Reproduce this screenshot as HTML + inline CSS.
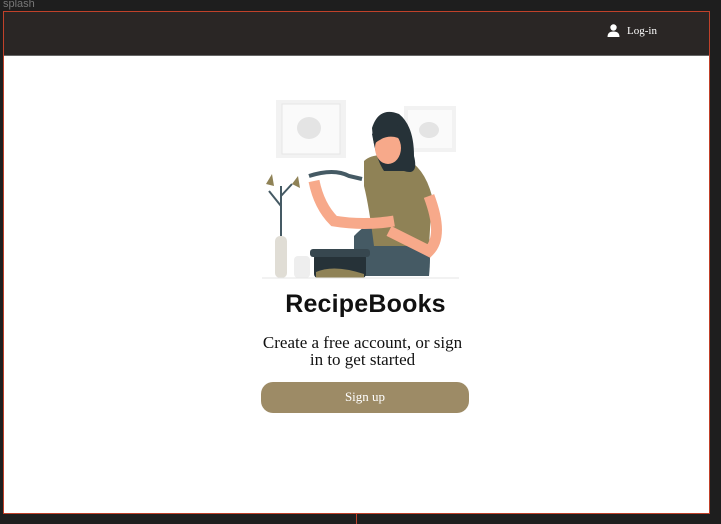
<!DOCTYPE html>
<html><head><meta charset="utf-8"><style>
*{margin:0;padding:0;box-sizing:border-box}
body{width:721px;height:524px;background:#1e1e1e;position:relative;overflow:hidden;font-family:"Liberation Serif",serif}
.lbl{position:absolute;left:3px;top:-2px;font:11px "Liberation Sans",sans-serif;color:#777}
.frame{position:absolute;left:3px;top:11px;width:707px;height:503px;border:1px solid #c0412a;background:#fff}
.hdr{position:absolute;left:0;top:0;width:705px;height:44px;background:#2a2625;border-bottom:1px solid #666}
.login{position:absolute;left:603px;top:12px;color:#fff;font-size:11px;display:flex;align-items:center;gap:7px}
.title{position:absolute;left:8px;width:707px;top:278px;text-align:center;font:bold 25px "Liberation Sans",sans-serif;color:#111;letter-spacing:.2px}
.sub{position:absolute;left:5px;width:707px;top:322px;text-align:center;font-size:17px;line-height:17px;color:#111}
.btn{position:absolute;left:257px;top:370px;width:208px;height:31px;border-radius:12px;background:#9d8b66;color:#fff;font-size:13px;text-align:center;line-height:30px}
.tick{position:absolute;left:356px;top:514px;width:1px;height:10px;background:#c0412a}
</style></head><body>
<div class="lbl">splash</div>
<div class="frame">
 <div class="hdr"><div class="login"><svg width="13" height="13" viewBox="0 0 13 13"><circle cx="6.5" cy="3.5" r="3.2" fill="#fff"/><path d="M0.5 13 Q0.5 7.5 6.5 7.5 Q12.5 7.5 12.5 13Z" fill="#fff"/></svg>Log-in</div></div>
 <svg style="position:absolute;left:250px;top:84px" width="210" height="185" viewBox="0 0 210 185">
  <rect x="22" y="4" width="70" height="58" fill="#f2f2f2"/><rect x="28" y="8" width="58" height="50" fill="#fafafa" stroke="#e6e6e6"/>
  <ellipse cx="55" cy="32" rx="12" ry="11" fill="#e4e4e4"/>
  <rect x="150" y="10" width="52" height="46" fill="#f2f2f2"/><rect x="154" y="14" width="44" height="38" fill="#fafafa"/>
  <ellipse cx="175" cy="34" rx="10" ry="8" fill="#e4e4e4"/>
  <path d="M100 180 L100 140 Q120 118 160 115 Q180 130 175 180Z" fill="#455a64"/>
  <path d="M110 65 Q120 55 150 62 Q170 70 178 100 L175 150 L120 150 Q115 110 110 90Z" fill="#8f8256"/>
  <path d="M118 32 Q125 10 145 18 Q160 30 160 60 Q165 80 150 75 L130 75 Q120 60 118 32Z" fill="#263238"/>
  <ellipse cx="134" cy="52" rx="13" ry="16" fill="#f7a98a"/>
  <path d="M118 38 Q130 22 150 32 L150 45 Q135 35 120 48Z" fill="#263238"/>
  <path d="M55 80 Q80 72 95 80 L108 83" stroke="#455a64" stroke-width="4" fill="none"/>
  <path d="M60 85 Q65 110 80 125 Q110 130 140 125" stroke="#f7a98a" stroke-width="11" fill="none"/>
  <path d="M175 100 Q190 140 175 155 L135 135" stroke="#f7a98a" stroke-width="11" fill="none"/>
  <rect x="60" y="158" width="52" height="24" rx="4" fill="#263238"/><rect x="56" y="153" width="60" height="8" rx="3" fill="#37474f"/>
  <path d="M62 176 Q80 168 110 178 L110 182 L62 182Z" fill="#8f8256"/>
  <rect x="21" y="140" width="12" height="42" rx="5" fill="#e0ddd5"/>
  <path d="M27 140 L27 90 M27 110 L15 95 M27 100 L38 88" stroke="#455a64" stroke-width="2" fill="none"/>
  <path d="M12 88 L18 78 L20 90Z M38 88 L44 80 L46 92Z" fill="#8f8256"/>
  <rect x="40" y="160" width="16" height="22" rx="4" fill="#eeeeee"/>
  <line x1="8" y1="182" x2="205" y2="182" stroke="#e6e6e6" stroke-width="1"/>
 </svg>
 <div class="title">RecipeBooks</div>
 <div class="sub">Create a free account, or sign<br>in to get started</div>
 <div class="btn">Sign up</div>
</div>
<div class="tick"></div>
</body></html>
